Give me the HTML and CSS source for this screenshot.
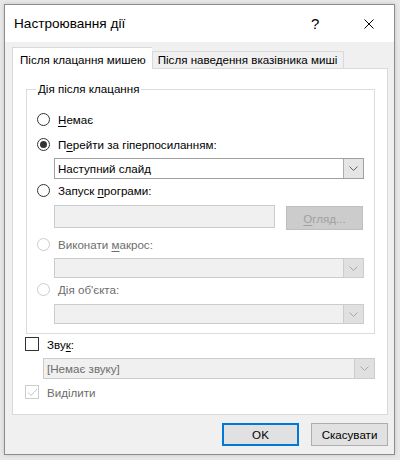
FILE: index.html
```html
<!DOCTYPE html>
<html lang="uk">
<head>
<meta charset="utf-8">
<link rel="stylesheet" href="styles.css">
</head>
<body>
<div class="dialog">
  <div class="titlebar">
    <span class="title">Настроювання дії</span>
    <span class="help">?</span>
    <svg class="close" width="10" height="10" viewBox="0 0 10 10"><path d="M0.5 0.5L9.5 9.5M9.5 0.5L0.5 9.5" stroke="#000" stroke-width="1" fill="none"/></svg>
  </div>
  <div class="body">
    <div class="tabs">
      <div class="tab active">Після клацання мишею</div>
      <div class="tab">Після наведення вказівника миші</div>
    </div>
    <div class="panel">
      <fieldset class="group">
        <legend>Дія після клацання</legend>
        <div class="opt r1"><span class="radio"></span><span><u>Н</u>емає</span></div>
        <div class="opt r2"><span class="radio on"></span><span>П<u>е</u>рейти за гіперпосиланням:</span></div>
        <div class="combo c1"><span class="val">Наступний слайд</span><span class="drop"><svg width="9" height="5" viewBox="0 0 9 5"><path d="M0.5 0.5L4.5 4.5L8.5 0.5" stroke="#606060" fill="none"/></svg></span></div>
        <div class="opt r3"><span class="radio"></span><span>Запуск <u>п</u>рограми:</span></div>
        <div class="filerow">
          <div class="textbox"></div>
          <div class="btn browse"><u>О</u>гляд...</div>
        </div>
        <div class="opt r4 dis"><span class="radio"></span><span>Виконати <u>м</u>акрос:</span></div>
        <div class="combo dis c2"><span class="val"></span><span class="drop"><svg width="9" height="5" viewBox="0 0 9 5"><path d="M0.5 0.5L4.5 4.5L8.5 0.5" stroke="#a8a8a8" fill="none"/></svg></span></div>
        <div class="opt r5 dis"><span class="radio"></span><span><u>Д</u>ія об'єкта:</span></div>
        <div class="combo dis c3"><span class="val"></span><span class="drop"><svg width="9" height="5" viewBox="0 0 9 5"><path d="M0.5 0.5L4.5 4.5L8.5 0.5" stroke="#a8a8a8" fill="none"/></svg></span></div>
      </fieldset>
      <div class="opt chk1"><span class="check"></span><span>Зву<u>к</u>:</span></div>
      <div class="combo dis sound"><span class="val">[Немає звуку]</span><span class="drop"><svg width="9" height="5" viewBox="0 0 9 5"><path d="M0.5 0.5L4.5 4.5L8.5 0.5" stroke="#a8a8a8" fill="none"/></svg></span></div>
      <div class="opt chk2 dis"><span class="check"><svg width="11" height="9" viewBox="0 0 11 9"><path d="M1 4.5L4 7.5L10 1" stroke="#c4c4c4" stroke-width="1" fill="none"/></svg></span><span>Ви<u>д</u>ілити</span></div>
    </div>
    <div class="buttons">
      <div class="btn ok">OK</div>
      <div class="btn">Скасувати</div>
    </div>
  </div>
</div>
</body>
</html>
```

FILE: styles.css
```css
* { box-sizing: border-box; }
html, body { margin: 0; padding: 0; }
body {
  background: #e8e8e8;
  width: 400px;
  height: 460px;
  padding: 4px 0 0 4px;
  font-family: "Liberation Sans", Arial, sans-serif;
  font-size: 11.6px;
  color: #000;
}
u { text-decoration: underline; text-underline-offset: 2px; }
.dialog {
  width: 391px;
  height: 451px;
  border: 1px solid #8c8c8c;
  background: #f0f0f0;
  box-shadow: 0 0 4px rgba(0,0,0,0.15);
  display: flex;
  flex-direction: column;
}
.titlebar {
  height: 37px;
  background: #fff;
  display: flex;
  align-items: center;
  padding-left: 9px;
}
.title { font-size: 13.6px; flex: 1; }
.help { font-size: 15px; width: 10px; margin-right: 43px; }
.close { margin-right: 20px; }
.body {
  flex: 1;
  padding: 5px 6px 0 7px;
  display: flex;
  flex-direction: column;
}
.tabs {
  display: flex;
  align-items: flex-end;
  height: 21px;
  position: relative;
  z-index: 1;
}
.tab {
  height: 17px;
  border: 1px solid #d9d9d9;
  border-bottom: none;
  background: #f0f0f0;
  padding: 0 6px 0 5px;
  line-height: 16px;
  white-space: nowrap;
}
.tab.active {
  height: 22px;
  margin-bottom: -1px;
  background: #fff;
  padding: 0 6px 0 7px;
  line-height: 24px;
  border-right: none;
}
.panel {
  height: 347px;
  border: 1px solid #d9d9d9;
  background: #fff;
  padding: 13px 12px 0 13px;
}
.group {
  margin: 0;
  border: 1px solid #dcdcdc;
  padding: 0 10px 9px 10px;
  min-width: 0;
}
.group legend {
  padding: 0 2px;
  margin-left: -1px;
  line-height: 14px;
}
.opt {
  display: flex;
  align-items: center;
  height: 16px;
  white-space: nowrap;
}
.opt.dis { color: #6d6d6d; }
.radio {
  width: 13px;
  height: 13px;
  border: 1px solid #333;
  border-radius: 50%;
  background: #fff;
  margin-right: 8px;
  display: flex;
  align-items: center;
  justify-content: center;
  flex: none;
}
.radio.on::after {
  content: "";
  width: 7px;
  height: 7px;
  border-radius: 50%;
  background: #333;
}
.opt.dis .radio { border-color: #cccccc; }
.r1 { margin-top: 15px; }
.r2 { margin-top: 9px; }
.r3 { margin-top: 3px; }
.r4 { margin-top: 6px; }
.r5 { margin-top: 3px; }
.combo {
  display: flex;
  height: 21px;
  border: 1px solid #a0a0a0;
  background: #fff;
  margin-left: 17px;
}
.combo .val { flex: 1; padding-left: 3px; line-height: 19px; }
.combo .drop {
  width: 20px;
  border-left: 1px solid #acacac;
  background: #e5e5e5;
  display: flex;
  align-items: center;
  justify-content: center;
}
.combo.dis { border-color: #cccccc; background: #f0f0f0; color: #6d6d6d; }
.combo.dis .drop { border-left-color: #cccccc; background: #e0e0e0; }
.c1 { margin-top: 6px; }
.c2 { margin-top: 6px; height: 20px; }
.c3 { margin-top: 7px; height: 20px; }
.filerow {
  display: flex;
  margin-top: 7px;
  margin-left: 17px;
  height: 25px;
  align-items: flex-start;
}
.textbox {
  width: 221px;
  height: 23px;
  border: 1px solid #cccccc;
  background: #f0f0f0;
}
.btn {
  width: 77px;
  height: 23px;
  border: 1px solid #adadad;
  background: #e1e1e1;
  display: flex;
  align-items: center;
  justify-content: center;
}
.btn.browse {
  margin-left: 11px;
  margin-top: 1px;
  height: 24px;
  background: #cccccc;
  border-color: #bfbfbf;
  color: #a0a0a0;
}
.check {
  width: 14px;
  height: 14px;
  border: 1px solid #333;
  background: #fff;
  margin-right: 8px;
  flex: none;
  display: flex;
  align-items: center;
  justify-content: center;
}
.opt.dis .check { border-color: #cccccc; }
.chk1 { margin-top: 2px; margin-left: -1px; }
.sound { margin: 6px 0 0 17px; width: 332px; }
.chk2 { margin-top: 5px; margin-left: -1px; }
.buttons {
  display: flex;
  justify-content: flex-end;
  gap: 12px;
  margin-top: 8px;
}
.btn.ok { border: 2px solid #0078d7; }
```
